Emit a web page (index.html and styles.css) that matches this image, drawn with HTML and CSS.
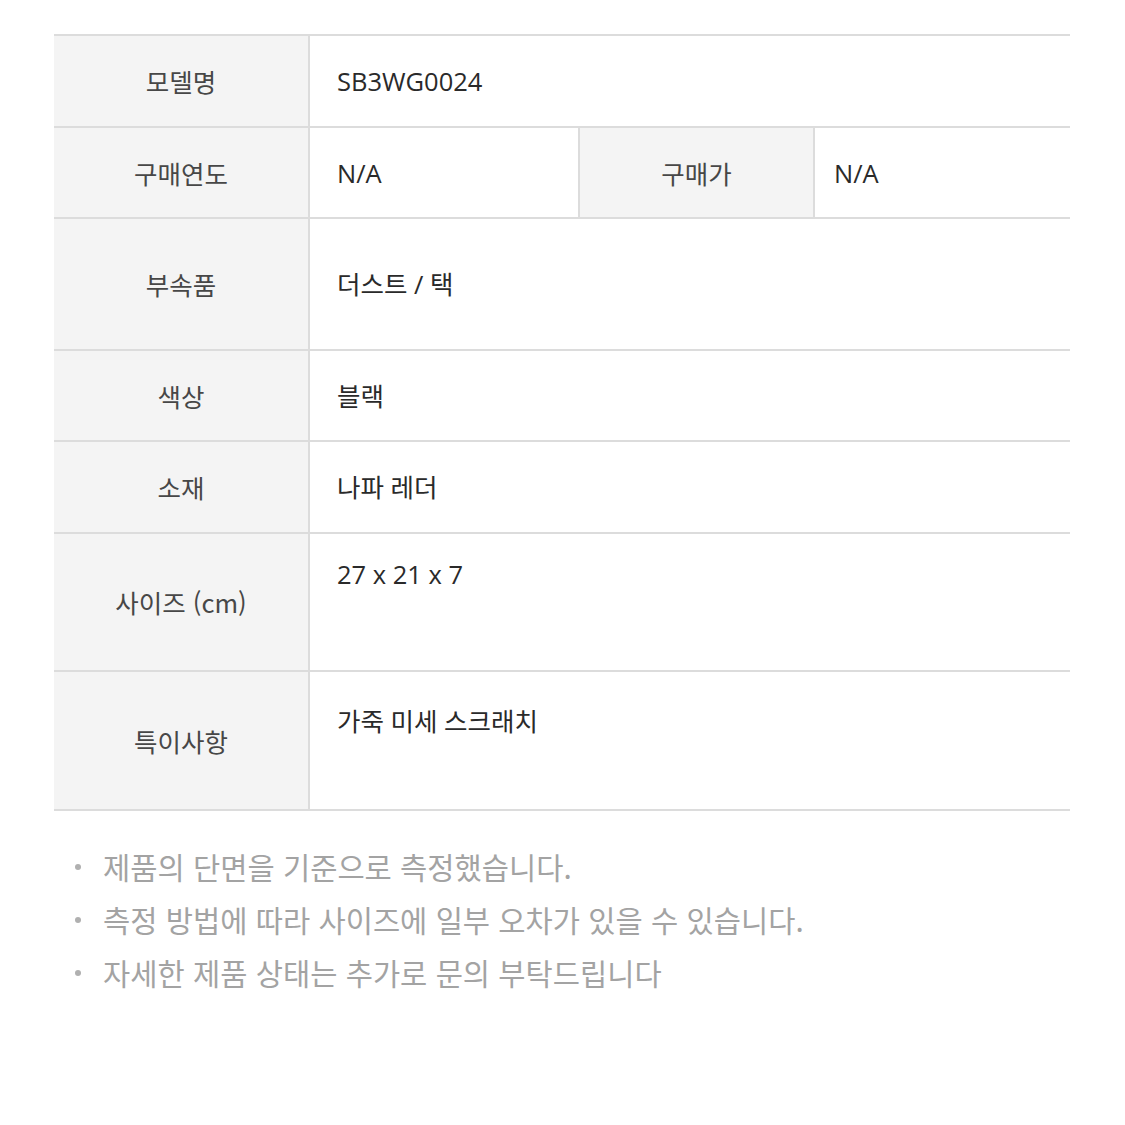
FILE: index.html
```html
<!DOCTYPE html>
<html lang="ko">
<head>
<meta charset="utf-8">
<link rel="stylesheet" href="styles.css">
</head>
<body>
<div class="page">
  <table class="spec">
    <colgroup>
      <col class="c1"><col class="c2"><col class="c3"><col class="c4">
    </colgroup>
    <tr class="r92">
      <th>모델명</th>
      <td colspan="3" class="val">SB3WG0024</td>
    </tr>
    <tr class="r91">
      <th>구매연도</th>
      <td class="val">N/A</td>
      <th>구매가</th>
      <td class="val val-narrow">N/A</td>
    </tr>
    <tr class="r132">
      <th>부속품</th>
      <td colspan="3" class="val">더스트 / 택</td>
    </tr>
    <tr class="r91">
      <th>색상</th>
      <td colspan="3" class="val">블랙</td>
    </tr>
    <tr class="r92">
      <th>소재</th>
      <td colspan="3" class="val">나파 레더</td>
    </tr>
    <tr class="r138">
      <th>사이즈 (cm)</th>
      <td colspan="3" class="val top top-a">27 x 21 x 7</td>
    </tr>
    <tr class="r139">
      <th>특이사항</th>
      <td colspan="3" class="val top top-b">가죽 미세 스크래치</td>
    </tr>
  </table>
  <ul class="notes">
    <li>제품의 단면을 기준으로 측정했습니다.</li>
    <li>측정 방법에 따라 사이즈에 일부 오차가 있을 수 있습니다.</li>
    <li>자세한 제품 상태는 추가로 문의 부탁드립니다</li>
  </ul>
</div>
</body>
</html>
```
FILE: styles.css
```css
html, body {
  margin: 0;
  padding: 0;
  background: #fff;
}
body {
  font-family: "Open Sans", "Noto Sans CJK KR", sans-serif;
}
.page {
  padding: 34px 55px 0 54px;
}
.spec {
  width: 1016px;
  border-collapse: collapse;
  table-layout: fixed;
}
.c1 { width: 255px; }
.c2 { width: 270px; }
.c3 { width: 235px; }
.c4 { width: 256px; }
.spec th, .spec td {
  border-top: 2px solid #dcdcdc;
  border-bottom: 2px solid #dcdcdc;
  padding: 0;
  font-size: 25.5px;
  line-height: 34px;
  vertical-align: middle;
}
.spec th {
  background: #f4f4f4;
  color: #474747;
  font-weight: 400;
  text-align: center;
  border-right: 2px solid #dcdcdc;
  font-family: "Noto Sans CJK KR", sans-serif;
}
.spec td + th {
  border-left: 2px solid #dcdcdc;
}
.spec .val {
  color: #2a2a2a;
  padding-left: 27px;
  text-align: left;
}
.spec .val-narrow { padding-left: 19px; }
.spec .top { vertical-align: top; }
.spec .top-a { padding-top: 23px; }
.spec .top-b { padding-top: 32px; }
.r92 { height: 92px; }
.r91 { height: 91px; }
.r132 { height: 132px; }
.r138 { height: 138px; }
.r139 { height: 139px; }
.notes {
  list-style: none;
  margin: 29px 0 0 0;
  padding: 0;
  font-family: "Noto Sans CJK KR", sans-serif;
  font-size: 29.6px;
  line-height: 53px;
  color: #a3a3a3;
}
.notes li {
  display: flex;
  align-items: center;
}
.notes li::before {
  content: "";
  width: 6px;
  height: 6px;
  border-radius: 50%;
  background: #b0b0b0;
  margin-left: 21px;
  margin-right: 22px;
  flex: none;
}
```
